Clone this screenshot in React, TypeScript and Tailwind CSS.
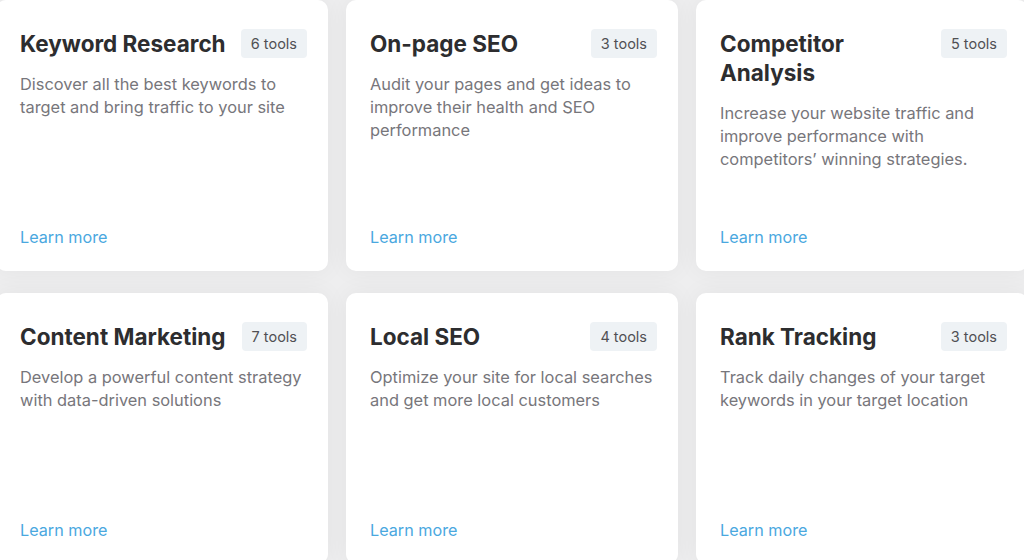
import React from 'react';

const cards = [
  { title: 'Keyword Research', tools: 6, text: 'Discover all the best keywords to target and bring traffic to your site' },
  { title: 'On-page SEO', tools: 3, text: 'Audit your pages and get ideas to improve their health and SEO performance' },
  { title: 'Competitor Analysis', tools: 5, text: 'Increase your website traffic and improve performance with competitors’ winning strategies.' },
  { title: 'Content Marketing', tools: 7, text: 'Develop a powerful content strategy with data-driven solutions' },
  { title: 'Local SEO', tools: 4, text: 'Optimize your site for local searches and get more local customers' },
  { title: 'Rank Tracking', tools: 3, text: 'Track daily changes of your target keywords in your target location' },
];

const App = () => {
  return (
    <div className="h-[560px] w-[1024px] overflow-hidden bg-[#eeeeef] font-['Inter',sans-serif]">
      <div className="-ml-[4px] grid w-[1032px] grid-cols-3 gap-x-[18px] gap-y-[22px]">
        {cards.map((card) => (
          <div
            key={card.title}
            className="flex h-[271px] flex-col rounded-[10px] bg-white pt-[29px] pr-[21px] pb-[22px] pl-[24px] shadow-[0_0_24px_rgba(0,0,0,0.05)]"
          >
            <div className="flex items-start justify-between gap-[12px]">
              <h3 className="text-[22.5px] leading-[29px] font-bold text-[#2d2d2f]">{card.title}</h3>
              <span className="shrink-0 rounded-[4px] bg-[#eef2f5] px-[10px] py-[4px] text-[14.5px] leading-[21px] text-[#505054]">
                {card.tools} tools
              </span>
            </div>
            <p className="mt-[15px] text-[16.4px] leading-[23px] text-[#77767b]">{card.text}</p>
            <a href="#" className="mt-auto text-[16.2px] leading-[24px] text-[#4aa8df]">
              Learn more
            </a>
          </div>
        ))}
      </div>
    </div>
  );
};

export default App;
